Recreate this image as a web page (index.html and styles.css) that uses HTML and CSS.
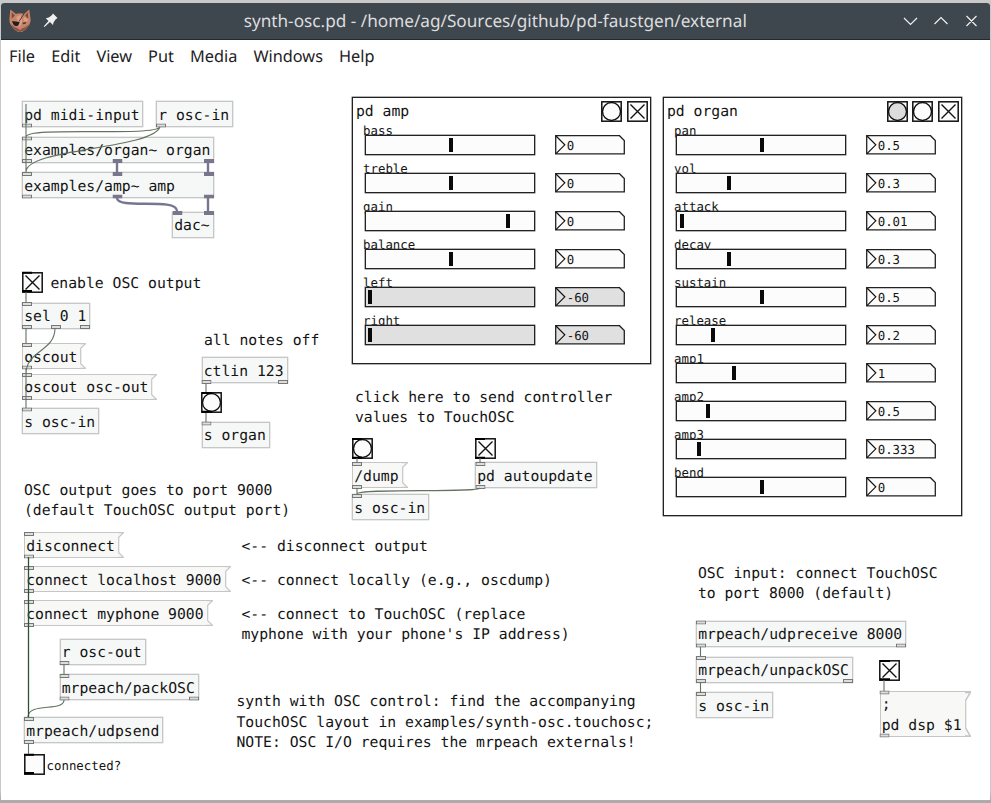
FILE: index.html
```html
<!DOCTYPE html>
<html lang="en">
<head>
<meta charset="utf-8">
<title>synth-osc.pd</title>
<link rel="stylesheet" href="styles.css">
</head>
<body>
<svg class="defs" aria-hidden="true">
  <defs>
    <symbol id="tgl" viewBox="0 0 21 21"><rect class="ctl" x=".8" y=".8" width="19.4" height="19.4"/><path class="ink" d="M3.5 3.5 17.5 17.5M17.5 3.5 3.5 17.5"/></symbol>
    <symbol id="bng" viewBox="0 0 21 21"><rect class="ctl" x=".8" y=".8" width="19.4" height="19.4"/><circle class="ink" cx="10.5" cy="10.5" r="9"/></symbol>
    <symbol id="io" viewBox="0 0 10 4"><rect class="io" x=".5" y=".5" width="9" height="3"/></symbol>
    <symbol id="sio" viewBox="0 0 10 4"><rect class="sio" width="10" height="4"/></symbol>
    <symbol id="num" viewBox="0 0 70 20"><path class="numshape" d="M.7.7H64.5L69.3 5.5V18.8H.7Z"/><path class="ink thin" d="M1 1 9.8 9.8 1 18.6"/></symbol>
    <symbol id="flag" viewBox="0 0 6 26" preserveAspectRatio="none"><path class="flagshape" d="M0 .6H5.5L.7 5.3V20.7L5.5 25.4H0"/></symbol>
  </defs>
</svg>
<div class="window">
  <header class="titlebar">
    <svg class="logo" viewBox="0 0 26 26">
      <path fill="#c88468" d="M2.500 1 8.500 6Q13 4.500 17.500 6L23 1 24.500 12Q24.500 17 20.500 21 17 25.500 13 25.500 9 25.500 5.500 21 1.500 17 1.500 12Z"/>
      <path fill="#7a4c40" d="M4 4 7.500 7.500 4 11ZM21.500 4 18.500 7.500 22 11Z"/>
      <path fill="#dd9f83" d="M9 9 14 7 15.500 14 13 20 10.500 15ZM17 9 22 12 21 14 17 14Z"/>
      <path stroke="#4a302c" fill="none" d="M17.500 5.500 12 14"/>
      <path fill="#201e22" d="M4.500 13.500 12.500 14.500Q12 19 8.500 19 5 18 4.500 13.500Z"/>
      <path fill="#463638" d="M15.500 15.500 20 14.500Q19.500 17 16.500 17Z"/>
      <path fill="#8a5645" d="M3.500 17Q6 20 10.500 21.500L13 23 15.500 21.500Q20 20 22.500 17 21 21 19 22.500 16 25.500 13 25.500 10 25.500 7 22.500 5 21 3.500 17Z"/>
      <path fill="#d87593" d="M10.500 21Q13 20 15.500 21L13 23Z"/>
    </svg>
    <svg class="pin" viewBox="0 0 15 15"><path fill="#f0f0f0" d="M10 .5 14.500 5 12.500 6.500 10.500 9.500 10 12 7 9 1.500 14 .8 13.300 5.500 8 2.800 5.200 5.800 4.500 8.500 2.500Z"/></svg>
    <h1 class="title">synth-osc.pd - /home/ag/Sources/github/pd-faustgen/external</h1>
    <svg class="winbuttons" viewBox="0 0 75 14"><path d="M1 4 7.500 10.500 14 4M31.500 10 38 3.500 44.500 10M63.500 2 73.500 12M73.500 2 63.500 12"/></svg>
  </header>
  <nav class="menu"><span>File</span><span>Edit</span><span>View</span><span>Put</span><span>Media</span><span>Windows</span><span>Help</span></nav>
</div>

<main class="canvas">
  <div class="obj midi-input">pd midi-input</div>
  <div class="obj r-osc-in">r osc-in</div>
  <div class="obj organ-dsp">examples/organ~ organ</div>
  <div class="obj amp-dsp">examples/amp~ amp</div>
  <div class="obj dac">dac~</div>

  <svg class="btn enable"><use href="#tgl"/></svg>
  <div class="note enable-note">enable OSC output</div>
  <div class="obj sel">sel 0 1</div>
  <div class="msg oscout"><span>oscout</span><svg><use href="#flag"/></svg></div>
  <div class="msg oscout-out"><span>oscout osc-out</span><svg><use href="#flag"/></svg></div>
  <div class="obj s-osc-in-a">s osc-in</div>

  <div class="note notes-off">all notes off</div>
  <div class="obj ctlin">ctlin 123</div>
  <svg class="btn off-bang"><use href="#bng"/></svg>
  <div class="obj s-organ">s organ</div>

  <div class="note click-note">click here to send controller<br>values to TouchOSC</div>
  <svg class="btn dump-bang"><use href="#bng"/></svg>
  <svg class="btn auto-toggle"><use href="#tgl"/></svg>
  <div class="msg dump"><span>/dump</span><svg><use href="#flag"/></svg></div>
  <div class="obj autoupdate">pd autoupdate</div>
  <div class="obj s-osc-in-b">s osc-in</div>

  <div class="note port-note">OSC output goes to port 9000<br>(default TouchOSC output port)</div>
  <div class="msg disconnect"><span>disconnect</span><svg><use href="#flag"/></svg></div>
  <div class="msg localhost"><span>connect localhost 9000</span><svg><use href="#flag"/></svg></div>
  <div class="msg myphone"><span>connect myphone 9000</span><svg><use href="#flag"/></svg></div>
  <div class="note disconnect-note">&lt;-- disconnect output</div>
  <div class="note local-note">&lt;-- connect locally (e.g., oscdump)</div>
  <div class="note phone-note">&lt;-- connect to TouchOSC (replace<br>myphone with your phone's IP address)</div>
  <div class="obj r-osc-out">r osc-out</div>
  <div class="obj packosc">mrpeach/packOSC</div>
  <div class="obj udpsend">mrpeach/udpsend</div>
  <svg class="btn connected" viewBox="0 0 21 21"><rect class="ctl" x=".8" y=".8" width="19.400" height="19.400"/></svg>
  <div class="note small connected-note">connected?</div>
  <div class="note about">synth with OSC control: find the accompanying<br>TouchOSC layout in examples/synth-osc.touchosc;<br>NOTE: OSC I/O requires the mrpeach externals!</div>

  <div class="note input-note">OSC input: connect TouchOSC<br>to port 8000 (default)</div>
  <div class="obj udpreceive">mrpeach/udpreceive 8000</div>
  <div class="obj unpackosc">mrpeach/unpackOSC</div>
  <div class="obj s-osc-in-c">s osc-in</div>
  <svg class="btn dsp-toggle"><use href="#tgl"/></svg>
  <div class="msg dsp"><span>;<br>pd dsp $1</span><svg><use href="#flag"/></svg></div>

  <section class="panel amp">
    <header><span>pd amp</span><svg><use href="#bng"/></svg><svg><use href="#tgl"/></svg></header>
    <div class="row"><label>bass</label><div class="slider"><i style="--v:83px"></i></div><div class="num"><svg><use href="#num"/></svg><b>0</b></div></div>
    <div class="row"><label>treble</label><div class="slider"><i style="--v:83px"></i></div><div class="num"><svg><use href="#num"/></svg><b>0</b></div></div>
    <div class="row"><label>gain</label><div class="slider"><i style="--v:140px"></i></div><div class="num"><svg><use href="#num"/></svg><b>0</b></div></div>
    <div class="row"><label>balance</label><div class="slider"><i style="--v:83px"></i></div><div class="num"><svg><use href="#num"/></svg><b>0</b></div></div>
    <div class="row meter"><label>left</label><div class="slider"><i style="--v:2px"></i></div><div class="num"><svg><use href="#num"/></svg><b>-60</b></div></div>
    <div class="row meter"><label>right</label><div class="slider"><i style="--v:2px"></i></div><div class="num"><svg><use href="#num"/></svg><b>-60</b></div></div>
  </section>

  <section class="panel organ">
    <header><span>pd organ</span><svg class="lit"><use href="#bng"/></svg><svg><use href="#bng"/></svg><svg><use href="#tgl"/></svg></header>
    <div class="row"><label>pan</label><div class="slider"><i style="--v:83px"></i></div><div class="num"><svg><use href="#num"/></svg><b>0.5</b></div></div>
    <div class="row"><label>vol</label><div class="slider"><i style="--v:50px"></i></div><div class="num"><svg><use href="#num"/></svg><b>0.3</b></div></div>
    <div class="row"><label>attack</label><div class="slider"><i style="--v:3px"></i></div><div class="num"><svg><use href="#num"/></svg><b>0.01</b></div></div>
    <div class="row"><label>decay</label><div class="slider"><i style="--v:50px"></i></div><div class="num"><svg><use href="#num"/></svg><b>0.3</b></div></div>
    <div class="row"><label>sustain</label><div class="slider"><i style="--v:83px"></i></div><div class="num"><svg><use href="#num"/></svg><b>0.5</b></div></div>
    <div class="row"><label>release</label><div class="slider"><i style="--v:34px"></i></div><div class="num"><svg><use href="#num"/></svg><b>0.2</b></div></div>
    <div class="row"><label>amp1</label><div class="slider"><i style="--v:55px"></i></div><div class="num"><svg><use href="#num"/></svg><b>1</b></div></div>
    <div class="row"><label>amp2</label><div class="slider"><i style="--v:29px"></i></div><div class="num"><svg><use href="#num"/></svg><b>0.5</b></div></div>
    <div class="row"><label>amp3</label><div class="slider"><i style="--v:20px"></i></div><div class="num"><svg><use href="#num"/></svg><b>0.333</b></div></div>
    <div class="row"><label>bend</label><div class="slider"><i style="--v:83px"></i></div><div class="num"><svg><use href="#num"/></svg><b>0</b></div></div>
  </section>

  <svg class="wires" viewBox="0 0 991 803">
    <!-- inlets and outlets -->
    <g>
      <use href="#io" x="22" y="123.500" width="10" height="4"/><use href="#io" x="156" y="123.500" width="10" height="4"/>
      <use href="#io" x="22" y="136.500" width="10" height="4"/><use href="#io" x="22" y="159" width="10" height="4"/>
      <use href="#io" x="22" y="172" width="10" height="4"/><use href="#io" x="22" y="194.500" width="10" height="4"/>
      <use href="#sio" x="112.500" y="159" width="10" height="4"/><use href="#sio" x="204" y="159" width="10" height="4"/>
      <use href="#sio" x="112.500" y="172" width="10" height="4"/><use href="#sio" x="204" y="172" width="10" height="4"/>
      <use href="#sio" x="112.500" y="194.500" width="10" height="4"/><use href="#sio" x="204" y="194.500" width="10" height="4"/>
      <use href="#sio" x="172.500" y="211" width="10" height="4"/><use href="#sio" x="204" y="211" width="10" height="4"/>
      <use href="#io" x="22" y="302" width="10" height="4"/><use href="#io" x="22" y="325" width="10" height="4"/><use href="#io" x="51" y="325" width="10" height="4"/><use href="#io" x="80" y="325" width="10" height="4"/>
      <use href="#io" x="22" y="343" width="10" height="4"/><use href="#io" x="22" y="365.500" width="10" height="4"/>
      <use href="#io" x="22" y="373" width="10" height="4"/><use href="#io" x="22" y="396" width="10" height="4"/><use href="#io" x="22" y="407.500" width="10" height="4"/>
      <use href="#io" x="201.500" y="380" width="10" height="4"/><use href="#io" x="278" y="380" width="10" height="4"/><use href="#io" x="201.500" y="421.500" width="10" height="4"/>
      <use href="#io" x="352" y="462" width="10" height="4"/><use href="#io" x="352" y="485" width="10" height="4"/><use href="#io" x="352" y="494" width="10" height="4"/>
      <use href="#io" x="475.500" y="462" width="10" height="4"/><use href="#io" x="475.500" y="485" width="10" height="4"/>
      <use href="#io" x="24" y="532" width="10" height="4"/><use href="#io" x="24" y="554.500" width="10" height="4"/>
      <use href="#io" x="24" y="566" width="10" height="4"/><use href="#io" x="24" y="589" width="10" height="4"/>
      <use href="#io" x="24" y="600" width="10" height="4"/><use href="#io" x="24" y="623" width="10" height="4"/>
      <use href="#io" x="59.500" y="661" width="10" height="4"/><use href="#io" x="59.500" y="674" width="10" height="4"/><use href="#io" x="59.500" y="696.500" width="10" height="4"/><use href="#io" x="189" y="696.500" width="10" height="4"/>
      <use href="#io" x="24" y="717" width="10" height="4"/><use href="#io" x="24" y="740" width="10" height="4"/>
      <use href="#io" x="696" y="620.500" width="10" height="4"/><use href="#io" x="696" y="643.500" width="10" height="4"/><use href="#io" x="896" y="643.500" width="10" height="4"/>
      <use href="#io" x="696" y="656" width="10" height="4"/><use href="#io" x="696" y="679" width="10" height="4"/><use href="#io" x="843" y="679" width="10" height="4"/><use href="#io" x="696" y="692" width="10" height="4"/>
      <use href="#io" x="879.500" y="690.500" width="10" height="4"/><use href="#io" x="879.500" y="733.500" width="10" height="4"/>
    </g>
    <!-- thick ends of the toggle and bang borders -->
    <path class="tabs" d="M22 272.700H32M22 291H32M202 393H212M202 411.700H212M352 439H362M352 457.700H362M475 439H485M475 457.700H485M24 754.700H34M24 773H34M880 661H890M880 679.300H890"/>
    <path class="wire" d="M26 104V172M160 127C154 137 26 126 26 137M160 127C150 150 26 148 26 172M26 292V302M26 328V343M55 328C55 352 26 350 26 374M26 368V408M206 384V392M206 413V422M357 458V462M357 488V494M480 458V462M480 488C478 493 357 488 357 494M64 665V674M64 700C64 712 28 702 28 717M28.500 743V754M700.500 647V656M700.500 682V692M884 680V691"/>
    <path class="wire dark" d="M28.500 557V717"/>
    <path class="signal" d="M117 162V172M208 162V172M208 198V211M117 198C117 210 177 197 177 211"/>
  </svg>
</main>
</body>
</html>
```
FILE: styles.css
```css
* { box-sizing: border-box; }

body {
  margin: 0;
  width: 991px;
  height: 803px;
  overflow: hidden;
  position: relative;
  background: linear-gradient(#c9c9c9, #c9c9c9 790px, #ababab 801px);
  color: #141414;
  text-rendering: geometricPrecision;
}

.defs { position: absolute; width: 0; height: 0; }

.window {
  margin: 2.5px 1.5px 0 1px;
  height: 797.5px;
  background: #fff;
  border-radius: 3px 3px 0 0;
  font-family: "Noto Sans", sans-serif;
}

.titlebar {
  display: flex;
  align-items: center;
  height: 37.5px;
  padding: 0 12px 0 7px;
  background: #3f474e;
  border-bottom: 1px solid #222a31;
  border-radius: 3px 3px 0 0;
}
.logo { width: 24px; height: 25px; }
.pin { width: 15px; height: 15px; margin-left: 11px; }
.title {
  flex: 1;
  margin: 0;
  padding: 2px 0 0 30px;
  text-align: center;
  font-size: 17.2px;
  font-weight: 400;
  color: #dcdddf;
}
.winbuttons { width: 75px; height: 14px; }
.winbuttons path { fill: none; stroke: #f0f0f0; stroke-width: 1.2; }

.menu {
  display: flex;
  gap: 16.1px;
  padding: 4px 8px;
  font-size: 16.3px;
  line-height: 24px;
  color: #1d2023;
}

.canvas {
  position: absolute;
  inset: 0;
  font: 14.74px/20.3px "DejaVu Sans Mono", monospace;
}

.obj, .msg, .note, .btn, .panel, .wires { position: absolute; }
.note { white-space: nowrap; padding-top: .7px; }
.small { font-size: 12.4px; }

.obj {
  height: 26px;
  padding: 3.8px 0 0 1.2px;
  border: 1px solid #c6c6c6;
  box-shadow: 0 0 0 .4px #d0d0d0;
  background: #f6f8f7;
  white-space: nowrap;
}

.msg { display: flex; height: 26px; white-space: nowrap; }
.msg span {
  flex: 1;
  padding: 3.8px 0 0 1.2px;
  border: 1px solid #c6c6c6;
  border-right: 0;
  background: #f8f8f7;
}
.msg svg { width: 6px; height: 100%; flex: none; }
.flagshape { fill: #f8f8f7; stroke: #c6c6c6; stroke-width: 1.2; }

.btn { width: 21px; height: 21px; }
.ctl { fill: #fcfcfc; stroke: #111; stroke-width: 1.5; }
.ink { fill: var(--disc, none); stroke: #111; stroke-width: 1.4; }
.thin { stroke-width: 1.2; }
.io { fill: #ddd; stroke: #777; stroke-width: 1; }
.sio { fill: #77768a; }

.wires { inset: 0; width: 991px; height: 803px; }
.wire { fill: none; stroke: #62735f; stroke-width: 1.1; }
.dark { stroke: #2c5230; stroke-width: 1.3; }
.signal { fill: none; stroke: #77758f; stroke-width: 2.4; }
.tabs { fill: none; stroke: #000; stroke-width: 2; }

/* graph-on-parent panels */
.panel {
  width: 299px;
  border: 1px solid #222;
  box-shadow: 0 0 0 .4px #444;
  background: #fff;
}
.panel header {
  display: flex;
  align-items: flex-start;
  gap: 4.4px;
  height: 22.5px;
  padding: 2.5px 2.5px 0 3px;
}
.panel header span { flex: 1; margin-top: 1.8px; }
.panel header svg { width: 21px; height: 21px; }
.lit { --disc: #dcdcdc; }

.row {
  display: grid;
  grid-template: 14.5px 23.55px / 169.7px 70px;
  column-gap: 20px;
  padding-left: 12px;
  font-size: 12.4px;
}
.row label { grid-column: 1 / 3; line-height: 19px; margin-left: -2px; }
.slider {
  position: relative;
  height: 20px;
  border: 1px solid #222;
  box-shadow: 0 0 0 .4px #444;
  background: #fcfcfc;
}
.slider i { display: block; width: 4px; height: 13.5px; margin: 2px 0 0 calc(var(--v) - .5px); background: #0a0a0a; }
.num { display: flex; height: 20px; }
.num svg { width: 70px; height: 20px; flex: none; }
.num b { margin-left: -58px; font-weight: 400; line-height: 22.5px; position: relative; }
.numshape { fill: var(--well, #fcfcfc); stroke: #222; stroke-width: 1.3; }
.meter { --well: #e0e0e0; }
.meter .slider { background: #e0e0e0; }

/* patch layout */
.amp { left: 352px; top: 97px; height: 267px; }
.organ { left: 663px; top: 97px; height: 419px; }

.midi-input { left: 22px; top: 101px; width: 121px; }
.r-osc-in { left: 156px; top: 101px; width: 77px; }
.organ-dsp { left: 22px; top: 136.5px; width: 192px; }
.amp-dsp { left: 22px; top: 172px; width: 192px; }
.dac { left: 172px; top: 211.5px; width: 42px; }

.enable { left: 21.5px; top: 271.5px; }
.enable-note { left: 50.5px; top: 273.5px; }
.sel { left: 22px; top: 302.5px; width: 68px; }
.oscout { left: 22px; top: 343px; width: 64px; }
.oscout-out { left: 22px; top: 373.5px; width: 135px; }
.s-osc-in-a { left: 22px; top: 408px; width: 77px; }

.notes-off { left: 204px; top: 330.5px; }
.ctlin { left: 201.5px; top: 357px; width: 86px; }
.off-bang { left: 201px; top: 392px; }
.s-organ { left: 201.5px; top: 421.5px; width: 68px; }

.click-note { left: 355px; top: 387.3px; }
.dump-bang { left: 352px; top: 438px; }
.auto-toggle { left: 475px; top: 438px; }
.dump { left: 352px; top: 462px; width: 56px; }
.autoupdate { left: 475px; top: 462px; width: 122px; }
.s-osc-in-b { left: 352px; top: 494px; width: 77px; }

.port-note { left: 24px; top: 480.5px; }
.disconnect { left: 24px; top: 532px; width: 100px; }
.localhost { left: 24px; top: 566px; width: 207px; }
.myphone { left: 24px; top: 600px; width: 189px; }
.disconnect-note { left: 241.5px; top: 536.3px; }
.local-note { left: 241.5px; top: 570px; }
.phone-note { left: 241.5px; top: 604px; }
.r-osc-out { left: 59.5px; top: 638.5px; width: 86px; }
.packosc { left: 59.5px; top: 674px; width: 139px; }
.udpsend { left: 24px; top: 717px; width: 139px; }
.connected { left: 23.5px; top: 753.5px; }
.connected-note { left: 46.5px; top: 755px; }
.about { left: 236.5px; top: 691.7px; }

.input-note { left: 698px; top: 563.5px; }
.udpreceive { left: 696px; top: 620.5px; width: 210px; }
.unpackosc { left: 696px; top: 656.5px; width: 157px; }
.s-osc-in-c { left: 696px; top: 692px; width: 77px; }
.dsp-toggle { left: 879px; top: 660px; }
.dsp { left: 879.5px; top: 690.5px; width: 91.5px; height: 46.5px; }
```
